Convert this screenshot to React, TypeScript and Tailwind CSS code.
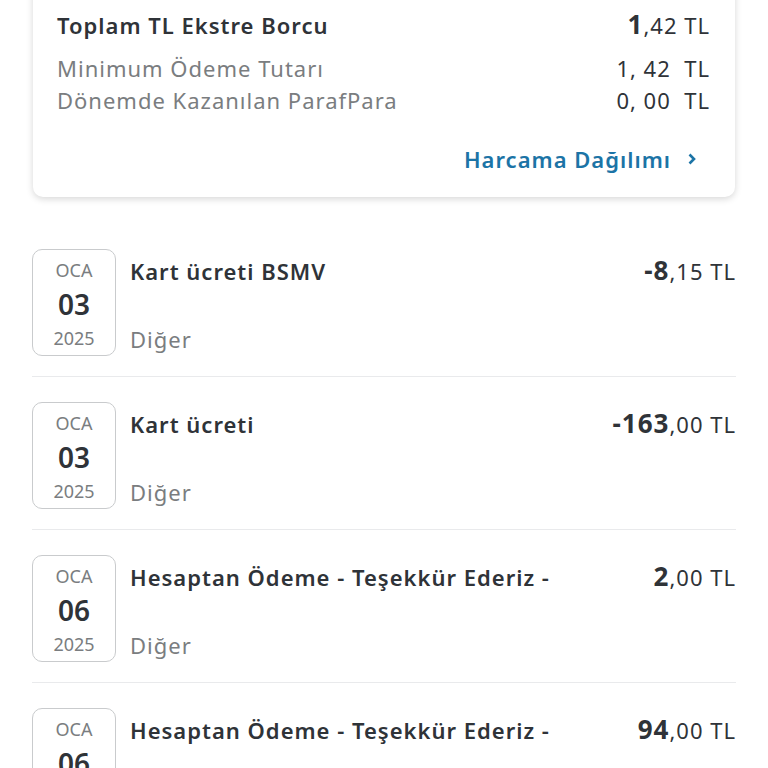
import React from 'react';

interface Txn {
  day: string;
  title: string;
  category: string;
  whole: string;
  cents: string;
}

const txns: Txn[] = [
  { day: '03', title: 'Kart ücreti BSMV', category: 'Diğer', whole: '-8', cents: ',15 TL' },
  { day: '03', title: 'Kart ücreti', category: 'Diğer', whole: '-163', cents: ',00 TL' },
  { day: '06', title: 'Hesaptan Ödeme - Teşekkür Ederiz -', category: 'Diğer', whole: '2', cents: ',00 TL' },
  { day: '06', title: 'Hesaptan Ödeme - Teşekkür Ederiz -', category: 'Diğer', whole: '94', cents: ',00 TL' },
];

const SummaryCard: React.FC = () => (
  <div className="mx-[33px] -mt-[20px] rounded-b-[10px] bg-white pl-6 pr-[25px] pt-[28px] pb-[22px] text-[22px] leading-[32px] tracking-[1px] shadow-[0_2px_7px_rgba(0,0,0,0.16)]">
    <div className="flex items-baseline justify-between text-[#2f3338]">
      <span className="font-semibold">Toplam TL Ekstre Borcu</span>
      <span>
        <span className="text-[26px] font-bold">1</span>,42 TL
      </span>
    </div>
    <div className="mt-[11px] flex items-baseline justify-between">
      <span className="text-[#7a7d80]">Minimum Ödeme Tutarı</span>
      <span className="text-[#2f3338]">1, 42&nbsp; TL</span>
    </div>
    <div className="flex items-baseline justify-between">
      <span className="text-[#7a7d80]">Dönemde Kazanılan ParafPara</span>
      <span className="text-[#2f3338]">0, 00&nbsp; TL</span>
    </div>
    <div className="mt-[27px] flex items-center justify-end gap-[16px] pr-[13px] font-semibold text-[#1c74a6]">
      <span>Harcama Dağılımı</span>
      <svg width="10" height="14" viewBox="0 0 10 14" fill="none">
        <path d="M2.5 2.5 L7 7 L2.5 11.5" stroke="#1c74a6" strokeWidth="2.6" />
      </svg>
    </div>
  </div>
);

const TxnRow: React.FC<{ t: Txn }> = ({ t }) => (
  <div className="flex border-b border-[#e9eaec] pt-[25px] pb-[20px]">
    <div className="flex h-[107px] w-[84px] shrink-0 flex-col items-center justify-center rounded-[10px] border border-[#c9cbcd] pt-[2px]">
      <span className="text-[18px] leading-[34px] text-[#7a7d80]">OCA</span>
      <span className="text-[28px] font-semibold leading-[34px] text-[#2f3338]">{t.day}</span>
      <span className="text-[18px] leading-[34px] text-[#7a7d80]">2025</span>
    </div>
    <div className="ml-[14px] flex h-[107px] flex-1 flex-col justify-between pt-[5px] text-[22px] leading-[32px] tracking-[1px]">
      <div className="flex items-baseline justify-between">
        <span className="font-semibold text-[#2f3338]">{t.title}</span>
        <span className="text-[#2f3338]">
          <span className="text-[26px] font-bold">{t.whole}</span>
          {t.cents}
        </span>
      </div>
      <span className="pb-[1px] text-[#7a7d80]">{t.category}</span>
    </div>
  </div>
);

export default function App() {
  return (
    <div className="h-[768px] w-[768px] overflow-hidden bg-white font-['Noto_Sans',sans-serif]">
      <SummaryCard />
      <div className="mx-[32px] mt-[27px]">
        {txns.map((t, i) => (
          <TxnRow key={i} t={t} />
        ))}
      </div>
    </div>
  );
}
